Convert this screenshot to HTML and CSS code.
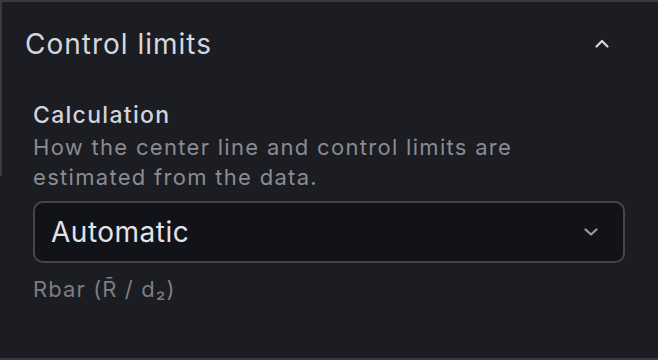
FILE: index.html
```html
<!DOCTYPE html>
<html lang="en">

<head>
  <meta charset="UTF-8">
  <meta name="viewport" content="width=device-width, initial-scale=1.0">
  <title>Control limits</title>
  <link rel="stylesheet" href="styles.css">
</head>

<body>
  <!-- 控制限面板 -->
  <div class="panel">
    <div class="panel-header">
      <h2>Control limits</h2>
      <svg class="chevron-up" width="16" height="16" viewBox="0 0 16 16">
        <path d="M2.5 10.5 L8 5 L13.5 10.5" fill="none" stroke="#d8d8e0" stroke-width="2.2" stroke-linecap="round" stroke-linejoin="round"/>
      </svg>
    </div>

    <div class="field">
      <div class="field-label">Calculation</div>
      <div class="field-desc">How the center line and control limits are estimated from the data.</div>
      <div class="select">
        <span>Automatic</span>
        <svg width="16" height="16" viewBox="0 0 16 16">
          <path d="M2.5 5.5 L8 10.5 L13.5 5.5" fill="none" stroke="#9a9aa4" stroke-width="2.2" stroke-linecap="round" stroke-linejoin="round"/>
        </svg>
      </div>
      <div class="field-hint">Rbar (R̄ / d₂)</div>
    </div>
  </div>
</body>

</html>
```

FILE: styles.css
```css
/* 全局样式 */
body {
  font-family: Inter, "Noto Sans", sans-serif;
  margin: 0;
  padding: 0;
  background-color: #1b1d22;
}

/* 面板 */
.panel {
  position: relative;
  height: 356px;
  border-top: 2px solid #393b41;
  border-bottom: 2px solid #393b41;
  box-sizing: content-box;
}

.panel::before {
  content: "";
  position: absolute;
  left: 0;
  top: 0;
  width: 2px;
  height: 174px;
  background-color: #393b41;
}

.panel-header {
  display: flex;
  align-items: center;
  justify-content: space-between;
  padding: 24px 48px 0 25px;
  height: 36px;
}

.panel-header h2 {
  margin: 0;
  font-size: 28px;
  font-weight: 400;
  letter-spacing: 1px;
  color: #d6d6de;
}

/* 字段 */
.field {
  padding: 38px 33px 0 33px;
}

.field-label {
  font-size: 23px;
  font-weight: 500;
  letter-spacing: 1.3px;
  color: #d2d2da;
  line-height: 30px;
}

.field-desc {
  margin-top: 2px;
  font-size: 22px;
  letter-spacing: 1.3px;
  color: #8a8b93;
  line-height: 30px;
  width: 540px;
}

.select {
  margin-top: 9px;
  height: 58px;
  border: 2px solid #45464c;
  border-radius: 10px;
  background-color: #121318;
  display: flex;
  align-items: center;
  justify-content: space-between;
  padding: 0 24px 0 16px;
}

.select span {
  font-size: 28px;
  letter-spacing: 0.5px;
  color: #e2e2ea;
}

.field-hint {
  margin-top: 11px;
  font-size: 22px;
  letter-spacing: 1.1px;
  color: #7b7c84;
  line-height: 30px;
}
```
